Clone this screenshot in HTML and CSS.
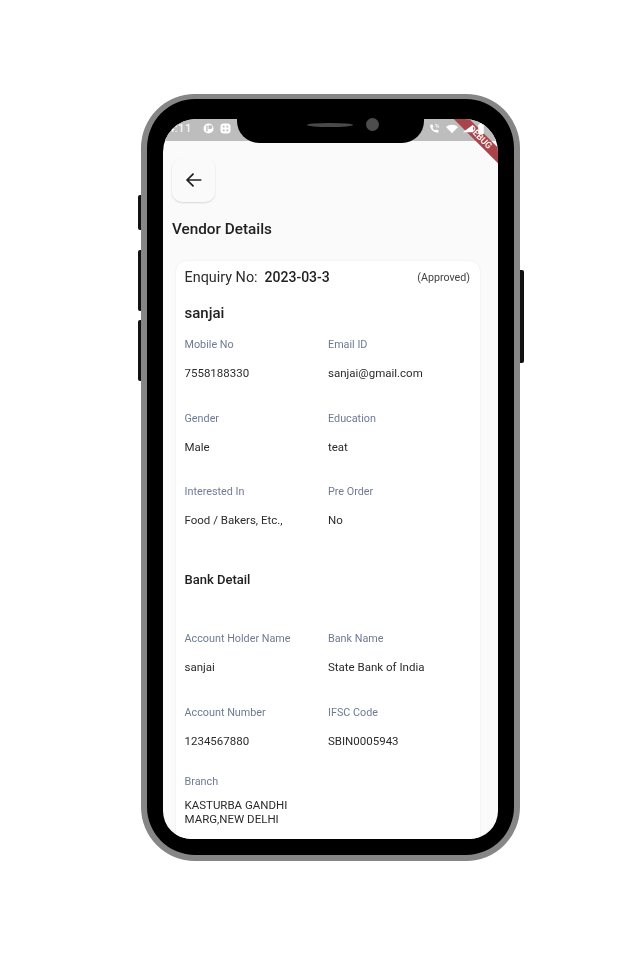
FILE: index.html
```html
<!DOCTYPE html>
<html lang="en">
<head>
<meta charset="utf-8">
<title>Vendor Details</title>
<link rel="stylesheet" href="styles.css">
</head>
<body>
<div class="device">
  <span class="side side-a"></span>
  <span class="side side-b"></span>
  <span class="side side-c"></span>
  <span class="side side-d"></span>
  <div class="bezel">
    <div class="screen">
      <div class="status">
        <span class="time">4:11</span>
        <svg class="sicon" viewBox="0 0 12 12"><circle cx="6" cy="6" r="5.500" fill="#fff"/><path d="M6 2.500h2.200a2 2 0 0 1 0 4H6zM3.500 2.800h1.500v6.500H3.500z" fill="#bdbdbd"/></svg>
        <svg class="sicon" viewBox="0 0 12 12"><rect x=".5" y=".5" width="11" height="11" rx="3.500" fill="#fff"/><path d="M3 3h2v2H3zM7 3h2v2H7zM3 7h2v2H3zM7 7h2v2H7z" fill="#bdbdbd"/></svg>
        <span class="status-gap"></span>
        <svg class="sicon" viewBox="0 0 12 12"><path d="M2 1.500l2 .3.8 2.500-1.200 1a7 7 0 0 0 3 3l1-1.200 2.600.8.3 2c-.2.5-.7.8-1.200.8A8.500 8.500 0 0 1 1.200 2.700c0-.5.3-1 .8-1.200z" fill="#fff"/><path d="M7 1.500a3.500 3.500 0 0 1 3.500 3.500M7 3.300A1.700 1.700 0 0 1 8.700 5" fill="none" stroke="#fff"/></svg>
        <svg class="sicon wifi" viewBox="0 0 14 12"><path d="M0 4.200C3.800.6 10.200.6 14 4.200L7 11.500z" fill="#fff"/></svg>
        <svg class="sicon signal" viewBox="0 0 12 12"><path d="M12 2v8H1z" fill="#fff"/></svg>
        <svg class="sicon battery" viewBox="0 0 8 12"><path d="M2.500 0h3v1.500H7V12H1V1.500h1.500z" fill="#fff"/></svg>
      </div>
      <main class="page">
        <button class="back" type="button" aria-label="Back">
          <svg viewBox="0 0 24 24"><path d="M20 12H4.500M11.500 5l-7 7 7 7" fill="none" stroke="#212121" stroke-width="1.900"/></svg>
        </button>
        <h1 class="title">Vendor Details</h1>
        <section class="card">
          <div class="enquiry">
            <span class="enq-label">Enquiry No:</span>
            <strong class="enq-value">2023-03-3</strong>
            <span class="enq-status">(Approved)</span>
          </div>
          <h2 class="name">sanjai</h2>
          <div class="grid">
            <div class="field"><span class="label">Mobile No</span><span class="value">7558188330</span></div>
            <div class="field"><span class="label">Email ID</span><span class="value">sanjai@gmail.com</span></div>
            <div class="field"><span class="label">Gender</span><span class="value">Male</span></div>
            <div class="field"><span class="label">Education</span><span class="value">teat</span></div>
            <div class="field"><span class="label">Interested In</span><span class="value">Food / Bakers, Etc.,</span></div>
            <div class="field"><span class="label">Pre Order</span><span class="value">No</span></div>
          </div>
          <h2 class="section-title">Bank Detail</h2>
          <div class="grid">
            <div class="field"><span class="label">Account Holder Name</span><span class="value">sanjai</span></div>
            <div class="field"><span class="label">Bank Name</span><span class="value">State Bank of India</span></div>
            <div class="field"><span class="label">Account Number</span><span class="value">1234567880</span></div>
            <div class="field"><span class="label">IFSC Code</span><span class="value">SBIN0005943</span></div>
            <div class="field field-last"><span class="label">Branch</span><span class="value value-wrap">KASTURBA GANDHI MARG,NEW DELHI</span></div>
          </div>
        </section>
      </main>
      <div class="ribbon"><span>DEBUG</span></div>
    </div>
    <div class="notch">
      <span class="speaker"></span>
      <span class="camera"></span>
    </div>
  </div>
</div>
</body>
</html>
```

FILE: styles.css
```css
* { box-sizing: border-box; }
html, body { margin: 0; background: #fff; }
body {
  width: 640px;
  height: 956px;
  padding: 94px 0 0 141px;
  font-family: Roboto, "Liberation Sans", sans-serif;
  overflow: hidden;
}
.device { position: relative; width: 379px; height: 767px; }
.bezel {
  position: relative;
  width: 100%;
  height: 100%;
  background: #000;
  border: solid #868686;
  border-width: 5px 6px 6px;
  border-radius: 54px;
  padding: 20px 16px 16px;
}
.side { position: absolute; background: #111; width: 4px; }
.side-a { left: -3px; top: 101px; height: 35px; border-radius: 2px 0 0 2px; }
.side-b { left: -3px; top: 156px; height: 61px; border-radius: 2px 0 0 2px; }
.side-c { left: -3px; top: 226px; height: 61px; border-radius: 2px 0 0 2px; }
.side-d { right: -4px; top: 176px; height: 93px; border-radius: 0 2px 2px 0; }
.screen {
  position: relative;
  height: 100%;
  background: #fafafa;
  border-radius: 33px 33px 28px 28px;
  overflow: hidden;
  display: flex;
  flex-direction: column;
  filter: blur(.4px);
}
.status {
  flex: none;
  height: 22px;
  background: #bdbdbd;
  display: flex;
  align-items: center;
  gap: 6px;
  padding: 0 13px 4px 5px;
  color: #fff;
  font-size: 11.500px;
  letter-spacing: .4px;
}
.time { width: 29px; }
.sicon { position: relative; z-index: 2; width: 11px; height: 11px; flex: none; }
.status-gap { flex: 1; }
.wifi { width: 12px; }
.signal { margin-left: -2px; }
.battery { width: 8px; margin-left: -2px; }
.page { flex: 1; min-height: 0; padding: 17px 9px 0; }
.back {
  display: flex;
  align-items: center;
  justify-content: center;
  width: 43px;
  height: 44px;
  padding: 0;
  border: 0;
  border-radius: 10px;
  background: #fafafa;
  box-shadow: 0 1px 2px rgba(0, 0, 0, .14);
}
.back svg { width: 22px; height: 22px; }
.title {
  margin: 17px 0 0;
  font-size: 15.300px;
  line-height: 20px;
  font-weight: 500;
  color: #212121;
}
.card {
  margin: 22px 9px 0 4px;
  height: 600px;
  padding: 6px 10px 0 8.500px;
  background: #fff;
  border-radius: 10px;
  box-shadow: 0 0 2px rgba(0, 0, 0, .1);
}
.enquiry { display: flex; align-items: center; height: 20px; color: #212121; }
.enq-label { font-size: 14.400px; color: #2b2b2b; }
.enq-value { margin-left: 7px; font-size: 14px; font-weight: 500; }
.enq-status { margin-left: auto; font-size: 10.700px; color: #424242; }
.name {
  margin: 16px 0 0;
  font-size: 15px;
  line-height: 20px;
  font-weight: 500;
  color: #212121;
}
.grid {
  display: grid;
  grid-template-columns: 143.500px 1fr;
  margin-top: 14px;
}
.field { display: flex; flex-direction: column; height: 73.500px; }
.label { font-size: 10.800px; line-height: 16px; color: #6f7a94; }
.value { margin-top: 12px; font-size: 11.500px; line-height: 16px; color: #2b2b2b; }
.value-wrap { width: 115px; line-height: 14px; margin-top: 8px; }
.field-last { height: auto; margin-top: -4px; }
.section-title {
  margin: 12px 0 0;
  font-size: 13px;
  line-height: 20px;
  font-weight: 500;
  color: #212121;
}
.section-title + .grid { margin-top: 41.500px; }
.ribbon {
  position: absolute;
  z-index: 1;
  top: 12.500px;
  right: -17.500px;
  width: 72px;
  height: 11px;
  background: #a8444a;
  transform: rotate(45deg);
  color: #fff;
  font-size: 9px;
  font-weight: 500;
  line-height: 11px;
  text-align: center;
}
.notch {
  position: absolute;
  left: 90px;
  top: 0;
  width: 187px;
  height: 44px;
  background: #000;
  border-radius: 0 0 22px 22px;
}
.speaker {
  position: absolute;
  left: 70px;
  top: 24px;
  width: 46px;
  height: 4px;
  border-radius: 50%;
  background: #4a4a4a;
}
.camera {
  position: absolute;
  left: 129px;
  top: 19px;
  width: 13px;
  height: 13px;
  border-radius: 50%;
  background: #4d4d4d;
}
```
